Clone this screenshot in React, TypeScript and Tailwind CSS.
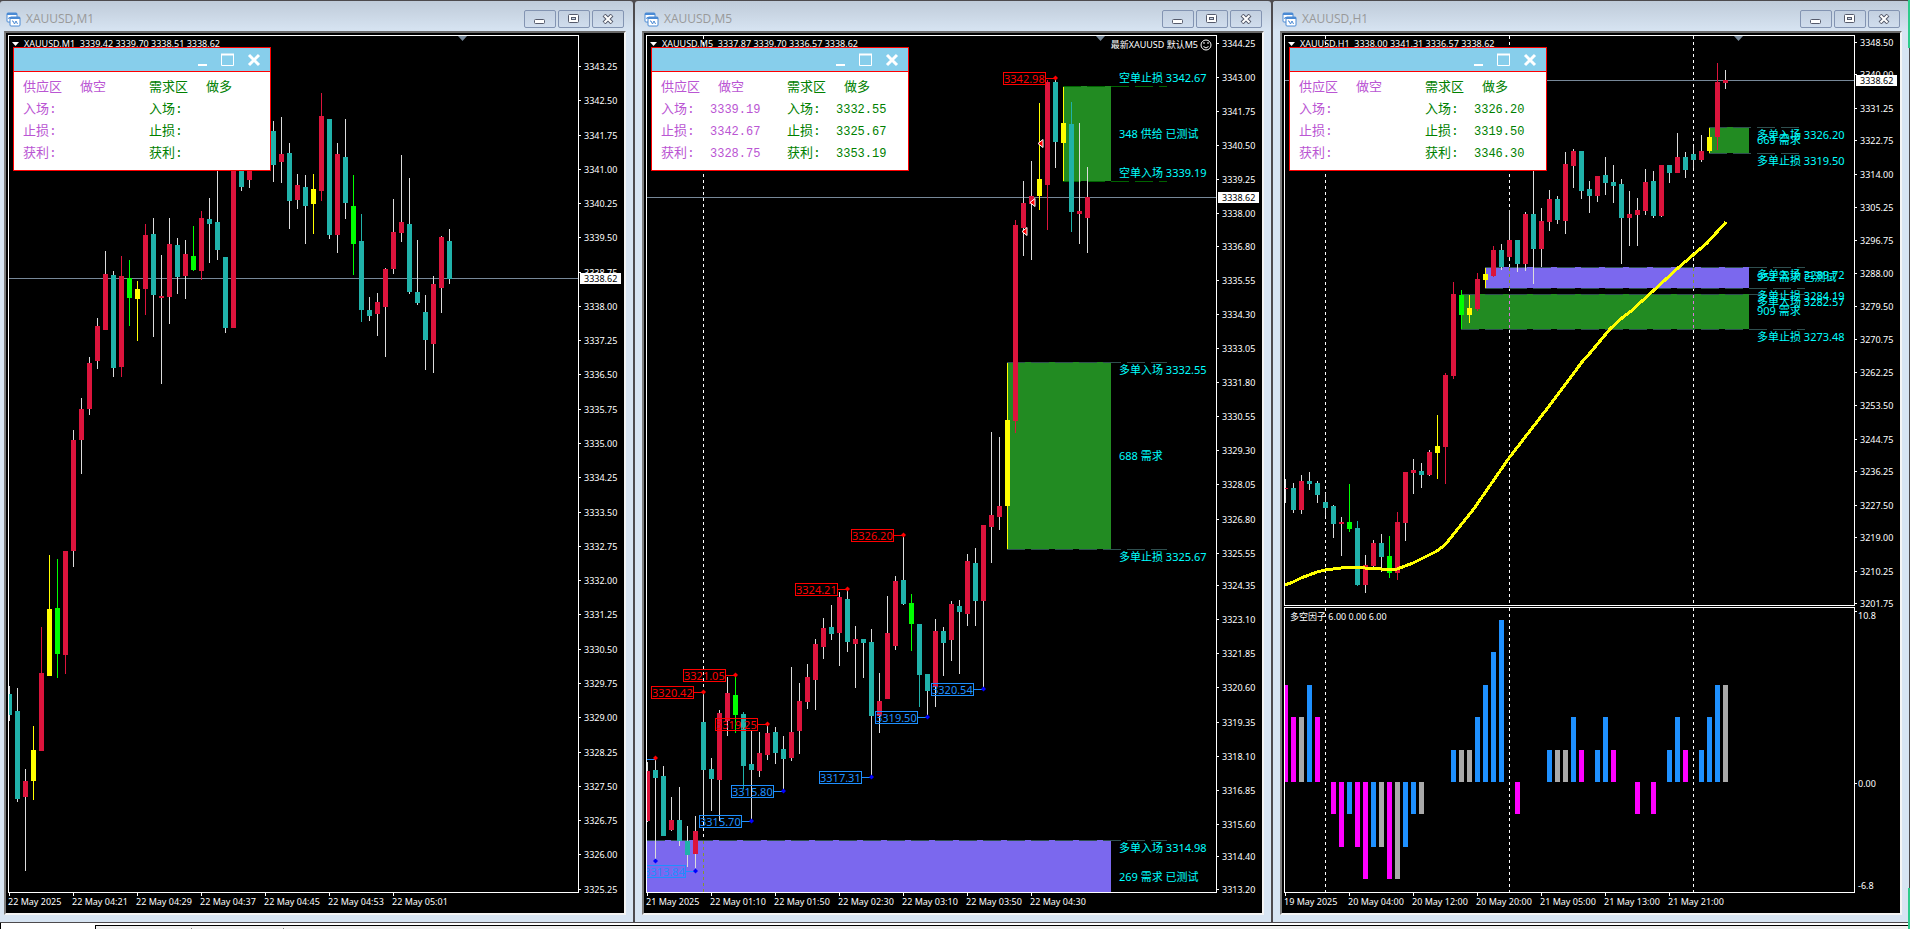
import type { ReactNode } from "react"

// high, body top, body bottom, low, colour
// lower case = pale wick, upper case = wick in the body colour
type Candle = [number, number, number, number, string]

type Zone = { from: number; top: number; bottom: number; fill: string; edge: string; dashTo: number; open?: boolean }
type Note = { y: number; text: string }
type Swing = { n: number; y: number; text: string; side: "high" | "low" }
type Levels = { entry: string; stop: string; target: string }

const STEP = 8
const PLOT_TOP = 36
const ZONE_RIGHT = 464

const COLORS: Record<string, string> = {
  r: "#dc143c",
  t: "#20b2aa",
  l: "#00ff00",
  y: "#ffff00",
}

const M1: Candle[] = [
  [686, 694, 715, 721, "t"], [688, 711, 799, 802, "t"], [769, 781, 797, 871, "r"], [726, 750, 781, 800, "Y"],
  [627, 673, 751, 751, "R"], [555, 609, 676, 676, "Y"], [559, 608, 654, 678, "L"], [551, 551, 655, 674, "R"],
  [430, 440, 551, 567, "r"], [398, 409, 440, 474, "r"], [357, 363, 409, 415, "r"], [318, 326, 361, 369, "r"],
  [251, 274, 330, 330, "r"], [271, 275, 368, 377, "t"], [256, 276, 367, 377, "R"], [260, 278, 298, 326, "L"],
  [281, 289, 299, 341, "Y"], [224, 235, 289, 315, "R"], [218, 234, 295, 337, "t"], [255, 296, 298, 384, "r"],
  [218, 244, 297, 324, "r"], [238, 245, 277, 294, "t"], [240, 254, 276, 299, "r"], [226, 256, 270, 271, "L"],
  [211, 218, 271, 280, "R"], [198, 219, 224, 263, "t"], [160, 222, 250, 260, "t"], [257, 257, 328, 333, "t"],
  [150, 150, 328, 328, "r"], [150, 150, 187, 191, "t"], [150, 150, 180, 188, "r"], [140, 145, 160, 168, "r"],
  [130, 140, 160, 168, "t"], [121, 131, 165, 182, "t"], [117, 154, 162, 183, "r"], [143, 153, 201, 229, "t"],
  [174, 185, 200, 209, "r"], [175, 187, 206, 244, "t"], [174, 189, 204, 234, "Y"], [93, 116, 191, 201, "R"],
  [119, 119, 235, 239, "t"], [143, 154, 235, 253, "r"], [119, 157, 203, 219, "t"], [175, 206, 244, 275, "L"],
  [214, 241, 310, 322, "T"], [297, 310, 316, 321, "t"], [293, 302, 314, 336, "r"], [268, 269, 307, 357, "r"],
  [199, 232, 269, 274, "r"], [155, 222, 233, 242, "r"], [178, 224, 292, 294, "t"], [240, 292, 303, 305, "t"],
  [295, 312, 340, 370, "t"], [276, 284, 344, 373, "r"], [236, 237, 288, 313, "r"], [229, 241, 279, 284, "t"],
]

const M5: Candle[] = [
  [762, 771, 821, 822, "r"], [759, 770, 778, 859, "t"], [766, 776, 836, 836, "t"], [797, 820, 830, 831, "r"],
  [787, 820, 841, 846, "t"], [826, 841, 855, 867, "t"], [816, 831, 854, 868, "r"], [693, 722, 770, 820, "t"],
  [758, 769, 779, 811, "t"], [710, 713, 780, 821, "r"], [677, 693, 721, 736, "r"], [676, 695, 715, 733, "L"],
  [712, 714, 766, 789, "T"], [730, 764, 770, 821, "t"], [732, 753, 771, 777, "r"], [725, 733, 755, 760, "r"],
  [727, 732, 753, 764, "t"], [736, 749, 759, 790, "t"], [667, 732, 758, 761, "r"], [683, 701, 731, 754, "r"],
  [664, 677, 702, 709, "r"], [639, 644, 680, 710, "r"], [618, 628, 647, 659, "r"], [605, 627, 634, 640, "t"],
  [592, 597, 633, 666, "r"], [590, 599, 642, 652, "t"], [626, 639, 644, 688, "r"], [639, 639, 643, 678, "t"],
  [629, 642, 716, 776, "t"], [673, 701, 716, 733, "r"], [596, 633, 699, 699, "r"], [576, 581, 646, 650, "r"],
  [535, 580, 604, 605, "t"], [594, 603, 624, 651, "L"], [624, 624, 675, 707, "T"], [674, 674, 691, 716, "t"],
  [619, 631, 687, 707, "r"], [627, 631, 643, 676, "t"], [601, 604, 640, 661, "r"], [600, 606, 612, 674, "t"],
  [554, 561, 614, 626, "r"], [548, 563, 601, 626, "t"], [525, 525, 601, 688, "r"], [432, 515, 527, 563, "r"],
  [437, 506, 517, 530, "r"], [363, 420, 506, 549, "Y"], [220, 225, 421, 433, "R"], [181, 203, 228, 256, "r"],
  [161, 196, 204, 260, "r"], [103, 179, 196, 210, "Y"], [80, 82, 185, 230, "R"], [79, 82, 142, 168, "t"],
  [87, 123, 143, 181, "Y"], [102, 124, 212, 232, "T"], [123, 211, 214, 244, "r"], [167, 197, 218, 253, "r"],
]

const H1: Candle[] = [
  [479, 488, 489, 503, "r"], [483, 488, 510, 513, "t"], [475, 481, 510, 514, "r"], [472, 481, 484, 490, "t"],
  [481, 483, 495, 503, "t"], [493, 502, 508, 516, "t"], [505, 506, 524, 538, "t"], [517, 522, 524, 556, "r"],
  [484, 522, 529, 532, "L"], [521, 528, 585, 586, "T"], [555, 565, 585, 593, "r"], [540, 543, 566, 568, "r"],
  [534, 543, 557, 572, "t"], [536, 556, 573, 578, "L"], [512, 522, 573, 580, "R"], [472, 472, 523, 541, "r"],
  [459, 470, 473, 494, "r"], [463, 471, 475, 488, "t"], [450, 452, 475, 476, "r"], [415, 446, 453, 479, "Y"],
  [373, 375, 447, 484, "R"], [282, 294, 376, 379, "R"], [290, 295, 315, 329, "L"], [295, 308, 315, 323, "Y"],
  [273, 279, 309, 311, "R"], [268, 274, 280, 288, "Y"], [246, 250, 276, 277, "R"], [244, 250, 267, 270, "t"],
  [210, 240, 257, 258, "r"], [240, 240, 264, 272, "t"], [212, 214, 264, 271, "r"], [165, 214, 249, 284, "t"],
  [208, 221, 249, 267, "r"], [190, 199, 222, 231, "r"], [196, 199, 220, 224, "t"], [152, 164, 221, 234, "r"],
  [149, 151, 166, 188, "r"], [151, 151, 191, 199, "t"], [181, 189, 196, 213, "t"], [176, 176, 196, 202, "r"],
  [157, 175, 183, 195, "t"], [165, 182, 186, 203, "t"], [179, 184, 218, 264, "t"], [191, 214, 218, 246, "r"],
  [198, 210, 215, 246, "r"], [169, 182, 211, 215, "r"], [171, 181, 216, 218, "t"], [165, 165, 216, 217, "r"],
  [165, 165, 173, 183, "t"], [133, 157, 173, 173, "r"], [152, 157, 170, 178, "t"], [147, 154, 160, 168, "t"],
  [135, 151, 160, 162, "r"], [128, 137, 151, 153, "Y"], [63, 82, 137, 150, "R"], [70, 80, 83, 89, "r"],
]

const M5_ZONES: Zone[] = [
  { from: 416, top: 86, bottom: 181, fill: "#228b22", edge: "#006400", dashTo: 520 },
  { from: 360, top: 362, bottom: 549, fill: "#228b22", edge: "#2f4f4f", dashTo: 520 },
  { from: 0, top: 840, bottom: 900, fill: "#7b68ee", edge: "#2f4f4f", dashTo: 520, open: true },
]

const H1_ZONES: Zone[] = [
  { from: 424, top: 127, bottom: 153, fill: "#228b22", edge: "#2f4f4f", dashTo: 514 },
  { from: 200, top: 267, bottom: 288, fill: "#7b68ee", edge: "#2f4f4f", dashTo: 520 },
  { from: 176, top: 294, bottom: 329, fill: "#228b22", edge: "#2f4f4f", dashTo: 520 },
]

const M5_NOTES: Note[] = [
  { y: 82, text: "空单止损 3342.67" },
  { y: 138, text: "348 供给 已测试" },
  { y: 177, text: "空单入场 3339.19" },
  { y: 374, text: "多单入场 3332.55" },
  { y: 460, text: "688 需求" },
  { y: 561, text: "多单止损 3325.67" },
  { y: 852, text: "多单入场 3314.98" },
  { y: 881, text: "269 需求 已测试" },
]

const H1_NOTES: Note[] = [
  { y: 139, text: "多单入场 3326.20" },
  { y: 144, text: "669 需求" },
  { y: 165, text: "多单止损 3319.50" },
  { y: 279, text: "多单入场 3289.72" },
  { y: 281, text: "952 需求 已测试" },
  { y: 300, text: "多单止损 3284.19" },
  { y: 306, text: "多单入场 3282.57" },
  { y: 315, text: "909 需求" },
  { y: 341, text: "多单止损 3273.48" },
]

const SWINGS: Swing[] = [
  { n: 51, y: 78, text: "3342.98", side: "high" },
  { n: 32, y: 535, text: "3326.20", side: "high" },
  { n: 25, y: 589, text: "3324.21", side: "high" },
  { n: 11, y: 675, text: "3321.05", side: "high" },
  { n: 7, y: 692, text: "3320.42", side: "high" },
  { n: 15, y: 724, text: "3319.25", side: "high" },
  { n: 42, y: 689, text: "3320.54", side: "low" },
  { n: 35, y: 717, text: "3319.50", side: "low" },
  { n: 28, y: 777, text: "3317.31", side: "low" },
  { n: 17, y: 791, text: "3315.80", side: "low" },
  { n: 13, y: 821, text: "3315.70", side: "low" },
  { n: 6, y: 871, text: "3313.84", side: "low" },
]

const MOVING_AVERAGE =
  "0,585 8,582 16,578 24,575 32,572 40,570 56,568 64,567 80,568 96,569 112,569 128,563 144,555 152,551 160,545 168,535 188,510 224,458 268,401 297,362 305,353 325,329 337,318 345,312 368,291 393,268 408,255 422,243 441,222"

// candle index, factor value, colour
const FACTOR: [number, number, string][] = [
  [0, 6, "m"], [1, 4, "m"], [2, 4, "g"], [3, 6, "b"], [4, 4, "m"], [6, -2, "m"], [7, -4, "m"], [8, -2, "b"],
  [9, -4, "m"], [10, -6, "m"], [11, -4, "b"], [12, -4, "g"], [13, -6, "m"], [14, -6, "g"], [15, -4, "b"],
  [16, -2, "b"], [17, -2, "g"], [21, 2, "b"], [22, 2, "g"], [23, 2, "g"], [24, 4, "b"], [25, 6, "b"],
  [26, 8, "b"], [27, 10, "b"], [29, -2, "m"], [33, 2, "b"], [34, 2, "g"], [35, 2, "g"], [36, 4, "b"],
  [37, 2, "m"], [39, 2, "b"], [40, 4, "b"], [41, 2, "m"], [44, -2, "m"], [46, -2, "m"], [48, 2, "b"],
  [49, 4, "b"], [50, 2, "m"], [52, 2, "b"], [53, 4, "b"], [54, 6, "b"], [55, 6, "g"],
]

const FACTOR_COLORS: Record<string, string> = { m: "#ff00ff", b: "#1e90ff", g: "#a9a9a9" }

const M1_PRICES = [
  "3343.25", "3342.50", "3341.75", "3341.00", "3340.25", "3339.50", "3338.75", "3338.00", "3337.25", "3336.50",
  "3335.75", "3335.00", "3334.25", "3333.50", "3332.75", "3332.00", "3331.25", "3330.50", "3329.75", "3329.00",
  "3328.25", "3327.50", "3326.75", "3326.00", "3325.25",
]
const M5_PRICES = [
  "3344.25", "3343.00", "3341.75", "3340.50", "3339.25", "3338.00", "3336.80", "3335.55", "3334.30", "3333.05",
  "3331.80", "3330.55", "3329.30", "3328.05", "3326.80", "3325.55", "3324.35", "3323.10", "3321.85", "3320.60",
  "3319.35", "3318.10", "3316.85", "3315.60", "3314.40", "3313.20",
]
const H1_PRICES = [
  "3348.50", "3340.00", "3331.25", "3322.75", "3314.00", "3305.25", "3296.75", "3288.00", "3279.50", "3270.75",
  "3262.25", "3253.50", "3244.75", "3236.25", "3227.50", "3219.00", "3210.25", "3201.75",
]

function Candles({ data }: { data: Candle[] }) {
  return (
    <g shapeRendering="crispEdges">
      {data.map(([high, top, bottom, low, c], n) => {
        const color = COLORS[c.toLowerCase()]
        const wick = c === c.toUpperCase() ? color : "#dcdcdc"
        return (
          <g key={n}>
            <rect x={n * STEP} y={high} width={1} height={low - high} fill={wick} />
            <rect x={n * STEP - 2} y={top} width={5} height={bottom - top} fill={color} />
          </g>
        )
      })}
    </g>
  )
}

function DayLine({ x, color = "#ffffff", from = 36, to = 1200 }: { x: number; color?: string; from?: number; to?: number }) {
  return <path d={`M${x + 0.5} ${from}V${to}`} stroke={color} strokeDasharray="3 3" shapeRendering="crispEdges" />
}

function Zones({ zones }: { zones: Zone[] }) {
  return (
    <g shapeRendering="crispEdges">
      {zones.map((z) => (
        <g key={z.top}>
          <rect x={z.from} y={z.top} width={ZONE_RIGHT - z.from} height={z.bottom - z.top} fill={z.fill} />
          <path d={`M${z.from} ${z.top + 0.5}H${z.dashTo}`} stroke={z.edge} strokeDasharray="18 6" />
          {!z.open && <path d={`M${z.from} ${z.bottom + 0.5}H${z.dashTo}`} stroke={z.edge} strokeDasharray="18 6" />}
        </g>
      ))}
    </g>
  )
}

function Notes({ notes }: { notes: Note[] }) {
  return (
    <g fill="#00ffff" className="text-[11px]">
      {notes.map((n) => (
        <text key={n.y} x={472} y={n.y}>{n.text}</text>
      ))}
    </g>
  )
}

function Diamond({ x, y, color }: { x: number; y: number; color: string }) {
  return <path d={`M${x - 2} ${y}l2.5 -2.5l2.5 2.5l-2.5 2.5z`} fill={color} />
}

function Swings() {
  return (
    <g className="text-[11px]">
      {SWINGS.map(({ n, y, text, side }) => {
        const x = n * STEP
        const color = side === "high" ? "#ff0000" : "#1e90ff"
        return (
          <g key={text}>
            <rect x={x - 51.5} y={y - 5.5} width={42} height={12} fill="none" stroke={color} shapeRendering="crispEdges" />
            <path d={`M${x - 9} ${y + 0.5}h10`} stroke={color} shapeRendering="crispEdges" />
            <text x={x - 51} y={y + 5} fill={color}>{text}</text>
            <Diamond x={x} y={y} color={side === "high" ? "#ff0000" : "#0000ff"} />
          </g>
        )
      })}
      <path d="M0 759.5H9" stroke="#1e90ff" shapeRendering="crispEdges" />
      <Diamond x={8} y={758} color="#ff0000" />
      <Diamond x={8} y={861} color="#0000ff" />
    </g>
  )
}

function SellArrow({ x, y }: { x: number; y: number }) {
  return <path d={`M${x - 3} ${y + 0.5}l5 -4v8z`} fill="#ff0000" stroke="#ffffff" />
}

function Smiley() {
  return (
    <g fill="none" stroke="#ffffff">
      <circle cx={559} cy={45} r={5} />
      <path d="M556.5 46.5q2.5 3 5 0" />
      <path d="M557 42v2M561 42v2" />
    </g>
  )
}

function Plot({ title, children }: { title: string; children: ReactNode }) {
  return (
    <svg className="block w-full h-full">
      <g transform={`translate(0 ${-PLOT_TOP})`}>
        <path d="M449 36h9l-4.5 5z" fill="#778899" />
        {children}
        <path d="M3 42h7l-3.5 4z" fill="#ffffff" />
        <text x={15} y={47} fill="#ffffff" className="text-[9px] whitespace-pre">{title}</text>
      </g>
    </svg>
  )
}

function PriceLine({ y }: { y: number }) {
  return <path d={`M0 ${y + 0.5}H2000`} stroke="#778899" shapeRendering="crispEdges" />
}

type AxisProps = { prices: string[]; first: number; scale: number; priceY: number; extra?: ReactNode }

function PriceAxis({ prices, first, scale, priceY, extra }: AxisProps) {
  const max = parseFloat(prices[0])
  return (
    <svg className="w-[45px] h-full shrink-0 overflow-visible text-[9px]" fill="#ffffff">
      <g transform="translate(0 -35)">
        {prices.map((p) => {
          const y = Math.round(first + (max - parseFloat(p)) * scale)
          return (
            <g key={p}>
              <rect x={0} y={y} width={2} height={1} />
              <text x={5} y={y + 4}>{p}</text>
            </g>
          )
        })}
        {extra}
        <rect x={1} y={priceY - 5} width={41} height={11} />
        <text x={5} y={priceY + 4} fill="#000000">3338.62</text>
      </g>
    </svg>
  )
}

function TimeAxis({ labels }: { labels: string[] }) {
  return (
    <svg className="block w-full h-5 shrink-0 text-[9px]" fill="#ffffff">
      {labels.map((label, i) => (
        <g key={label}>
          <rect x={3 + i * 64} y={0} width={1} height={3} />
          <text x={2 + i * 64} y={12}>{label}</text>
        </g>
      ))}
    </svg>
  )
}

function LevelsPanel({ sell, buy }: { sell?: Levels; buy?: Levels }) {
  const rows = [
    ["入场:", sell?.entry, buy?.entry],
    ["止损:", sell?.stop, buy?.stop],
    ["获利:", sell?.target, buy?.target],
  ]
  return (
    <section className="absolute left-1 top-[11px] w-[258px] h-[124px] bg-white border border-[#ff0000]">
      <div className="flex h-6 items-center justify-end gap-3 bg-[#87ceeb] border-b border-[#ff0000] pr-[9px]">
        <button aria-label="最小化">
          <svg width="14" height="14"><path d="M3 12h9" stroke="#fff" strokeWidth="2" /></svg>
        </button>
        <button aria-label="最大化">
          <svg width="14" height="14"><path d="M.5 1.5h12v11H.5z" stroke="#fff" fill="none" /><path d="M0 1.5h13" stroke="#fff" strokeWidth="2" /></svg>
        </button>
        <button aria-label="关闭">
          <svg width="14" height="14"><path d="M2 2l10 10M12 2L2 12" stroke="#fff" strokeWidth="3" /></svg>
        </button>
      </div>
      <table className="mt-[5px] ml-[9px] table-fixed w-[240px] text-left text-[13px] leading-[22px] text-[#ba55d3] font-['Liberation_Mono','Noto_Sans_CJK_SC',monospace]">
        <thead>
          <tr className="h-[22px]">
            <th className="w-[49px] font-normal whitespace-nowrap">供应区</th>
            <th className="w-[77px] pl-2 font-normal">做空</th>
            <th className="w-[49px] font-normal whitespace-nowrap text-[#008000]">需求区</th>
            <th className="w-[65px] pl-2 font-normal text-[#008000]">做多</th>
          </tr>
        </thead>
        <tbody>
          {rows.map(([label, s, b]) => (
            <tr key={label} className="h-[22px]">
              <td>{label}</td>
              <td className="text-[12px]">{s}</td>
              <td className="text-[#008000]">{label}</td>
              <td className="text-[12px] text-[#008000]">{b}</td>
            </tr>
          ))}
        </tbody>
      </table>
    </section>
  )
}

function ChartIcon() {
  return (
    <svg width="15" height="15" fill="none" stroke="#4a8ad4">
      <rect x="1" y="1" width="10" height="9" rx="1" fill="#fff" />
      <path d="M1 2h10" strokeWidth="2" />
      <path d="M2.5 7l1-2l1 2l1-2" />
      <rect x="4" y="5" width="10" height="9" rx="1" fill="#fff" />
      <path d="M4 6h10" strokeWidth="2" />
      <path d="M6 9h1l1.5 3l1.5-3l1.5 3" />
    </svg>
  )
}

const WINDOW_BUTTON =
  "flex w-8 h-[18px] items-center justify-center rounded-[2px] border border-[#8394b2] bg-linear-to-b from-[#c3d0e0] to-[#d0dded]"

function TitleBar({ title }: { title: string }) {
  return (
    <header className="flex h-[30px] shrink-0 items-center pt-[6px] pl-[2px]">
      <ChartIcon />
      <h2 className="ml-[5px] flex-1 font-['Open_Sans','Noto_Sans',sans-serif] text-[12px] leading-4 text-[#999999]">{title}</h2>
      <div className="flex gap-[2px] mr-[2px]">
        <button aria-label="Minimize" className={WINDOW_BUTTON}>
          <svg width="12" height="12"><rect x=".5" y="6.5" width="10" height="4" rx="1" fill="#fff" stroke="#555a6b" /></svg>
        </button>
        <button aria-label="Restore" className={WINDOW_BUTTON}>
          <svg width="12" height="10" fill="#fff" stroke="#555a6b">
            <rect x=".5" y=".5" width="10" height="8" rx="1" />
            <rect x="3.5" y="3.5" width="4" height="2" fill="#c9d5e4" />
          </svg>
        </button>
        <button aria-label="Close" className={WINDOW_BUTTON}>
          <svg width="12" height="10">
            <path d="M2 1l8 8M10 1l-8 8" stroke="#555a6b" strokeWidth="4" />
            <path d="M2.5 1.5l7 7M9.5 1.5l-7 7" stroke="#fff" strokeWidth="2" />
          </svg>
        </button>
      </div>
    </header>
  )
}

type WindowProps = { title: string; inset: string; times: string[]; axis: ReactNode; children: ReactNode }

function ChartWindow({ title, inset, times, axis, children }: WindowProps) {
  return (
    <article className={`flex min-w-0 flex-col rounded-t-[3px] bg-[#d7e4f2] bg-[linear-gradient(#bfcbd9,#d7e4f2_30px)] pb-[7px] ${inset}`}>
      <TitleBar title={title} />
      <div className="flex min-h-0 flex-1 flex-col border-2 border-t-[#696969] border-l-[#7d7d7d] border-r-[#f4f4f4] border-b-[#f4f4f4] bg-black pt-[2px]">
        <div className="flex min-h-0 flex-1 pl-[2px]">
          <div className="flex min-w-0 flex-1 flex-col gap-px">{children}</div>
          {axis}
        </div>
        <TimeAxis labels={times} />
      </div>
    </article>
  )
}

function M1Window() {
  return (
    <ChartWindow
      title="XAUUSD,M1"
      inset="pl-1 pr-[7px]"
      times={["22 May 2025", "22 May 04:21", "22 May 04:29", "22 May 04:37", "22 May 04:45", "22 May 04:53", "22 May 05:01"]}
      axis={<PriceAxis prices={M1_PRICES} first={66} scale={45.7} priceY={278} />}
    >
      <div className="relative min-h-0 flex-1 border border-white">
        <Plot title="XAUUSD,M1  3339.42 3339.70 3338.51 3338.62">
          <PriceLine y={278} />
          <Candles data={M1} />
        </Plot>
        <LevelsPanel />
      </div>
    </ChartWindow>
  )
}

function M5Window() {
  return (
    <ChartWindow
      title="XAUUSD,M5"
      inset="px-[7px]"
      times={["21 May 2025", "22 May 01:10", "22 May 01:50", "22 May 02:30", "22 May 03:10", "22 May 03:50", "22 May 04:30"]}
      axis={<PriceAxis prices={M5_PRICES} first={43} scale={27.25} priceY={197} />}
    >
      <div className="relative min-h-0 flex-1 border border-white">
        <Plot title="XAUUSD,M5  3337.87 3339.70 3336.57 3338.62">
          <DayLine x={56} />
          <Zones zones={M5_ZONES} />
          <DayLine x={56} color="#84972f" from={841} />
          <PriceLine y={197} />
          <Candles data={M5} />
          <Swings />
          <SellArrow x={394} y={143} />
          <SellArrow x={386} y={202} />
          <SellArrow x={378} y={231} />
          <Notes notes={M5_NOTES} />
          <text x={551} y={48} textAnchor="end" fill="#ffffff" className="text-[9px]">最新XAUUSD 默认M5</text>
          <Smiley />
        </Plot>
        <LevelsPanel
          sell={{ entry: "3339.19", stop: "3342.67", target: "3328.75" }}
          buy={{ entry: "3332.55", stop: "3325.67", target: "3353.19" }}
        />
      </div>
    </ChartWindow>
  )
}

function FactorPlot() {
  const zero = 783
  return (
    <svg className="block w-full h-full">
      <g transform="translate(0 -609)">
        <DayLine x={40} from={609} />
        <DayLine x={224} from={609} />
        <DayLine x={408} from={609} />
        <g shapeRendering="crispEdges">
          {FACTOR.map(([n, value, c]) => {
            const h = Math.round(Math.abs(value) * 16.2)
            return <rect key={n} x={n * STEP - 2} y={value > 0 ? zero - h : zero} width={5} height={h} fill={FACTOR_COLORS[c]} />
          })}
        </g>
        <text x={5} y={621} fill="#ffffff" className="text-[9px]">多空因子 6.00 0.00 6.00</text>
      </g>
    </svg>
  )
}

function H1Window() {
  const factorTicks = (
    <>
      <rect x={0} y={611} width={2} height={1} />
      <text x={3} y={619}>10.8</text>
      <rect x={0} y={783} width={2} height={1} />
      <text x={3} y={787}>0.00</text>
      <text x={3} y={889}>-6.8</text>
    </>
  )
  return (
    <ChartWindow
      title="XAUUSD,H1"
      inset="px-[7px] border-r border-[#4d4a4d]"
      times={["19 May 2025", "20 May 04:00", "20 May 12:00", "20 May 20:00", "21 May 05:00", "21 May 13:00", "21 May 21:00"]}
      axis={<PriceAxis prices={H1_PRICES} first={42} scale={3.823} priceY={80} extra={factorTicks} />}
    >
      <div className="relative min-h-0 flex-[572] border border-white">
        <Plot title="XAUUSD,H1  3338.00 3341.31 3336.57 3338.62">
          <DayLine x={40} />
          <DayLine x={224} />
          <DayLine x={408} />
          <Zones zones={H1_ZONES} />
          {[224, 408].map((x) => (
            <g key={x}>
              <DayLine x={x} color="#84972f" from={268} to={288} />
              <DayLine x={x} color="#dd74dd" from={295} to={329} />
            </g>
          ))}
          <PriceLine y={80} />
          <Candles data={H1} />
          <polyline
            points={MOVING_AVERAGE}
            fill="none"
            stroke="#ffff00"
            strokeWidth={3}
            strokeLinejoin="round"
            shapeRendering="crispEdges"
          />
          <Notes notes={H1_NOTES} />
        </Plot>
        <LevelsPanel buy={{ entry: "3326.20", stop: "3319.50", target: "3346.30" }} />
      </div>
      <div className="min-h-0 flex-[285] border border-white">
        <FactorPlot />
      </div>
    </ChartWindow>
  )
}

export default function App() {
  return (
    <div className="relative flex h-screen flex-col overflow-hidden bg-[#4d4a4d] pt-px font-['Noto_Sans','Noto_Sans_CJK_SC',sans-serif]">
      <main className="grid min-h-0 flex-1 grid-cols-[633fr_636fr_637fr] gap-[2px]">
        <M1Window />
        <M5Window />
        <H1Window />
      </main>

      {/* Top edge of the tab strip */}
      <footer className="mt-px flex h-[6px] shrink-0 bg-white">
        <div className="w-[95px] border-l border-black" />
        <div className="mt-[2px] flex flex-1 border-t border-l border-black bg-[#f0f0f0] pt-[2px]">
          <div className="w-24 border-r border-[#808080]" />
          <div className="w-[92px] border-r border-[#808080]" />
        </div>
      </footer>

      <div className="absolute right-0 top-0 h-12 w-[2px] bg-[#2ecc8b]" />
      <div className="absolute right-0 bottom-0 h-[41px] w-[2px] bg-[#2ecc8b]" />
    </div>
  )
}
